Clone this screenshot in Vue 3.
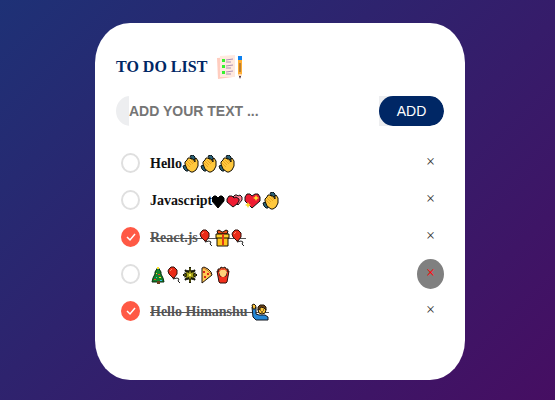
<script setup>
import { ref } from 'vue'

const draft = ref('')
const tasks = ref([
  { id: 1, text: 'Hello', icons: ['clap', 'clap', 'clap'], done: false },
  { id: 2, text: 'Javascript', icons: ['heart', 'hearts', 'sparkle', 'clap'], done: false },
  { id: 3, text: 'React.js', icons: ['balloon', 'gift', 'balloon'], done: true },
  { id: 4, text: '', icons: ['tree', 'balloon', 'firework', 'pizza', 'fries'], done: false, active: true },
  { id: 5, text: 'Hello Himanshu ', icons: ['raise'], done: true }
])

function addTask() {
  const text = draft.value.trim()
  if (!text) return
  tasks.value.push({ id: Date.now(), text, icons: [], done: false })
  draft.value = ''
}

function removeTask(id) {
  tasks.value = tasks.value.filter((task) => task.id !== id)
}
</script>

<template>
  <svg class="sprite" aria-hidden="true">
    <symbol id="clap" viewBox="0 0 18 18">
      <path d="M8 1l3-1 2 2 0 3-3 0z" fill="#2a6378" stroke="#0c161c" stroke-linejoin="round" />
      <path d="M1 11l3-1 3 3-1 3-2 0-2-2z" fill="#2a6378" stroke="#0c161c" stroke-linejoin="round" />
      <path d="M3 9l0-2 2-2 1-2 2 0 1 1 2 0 2 3 0-3 1-1 2 3v5l-2 4-3 2H9l-4-3z" fill="#ffc83d" stroke="#151005" stroke-linejoin="round" />
      <path d="M4 8l4 4M5 6l4 4M7 5l4 4M10 5l2 3" stroke="#e39a1c" stroke-width=".8" fill="none" />
    </symbol>
    <symbol id="heart" viewBox="0 0 14 18">
      <path d="M6 16L0 9V6l2-2h2l2 2 2-2h2l2 2v3z" fill="#000" stroke="#000" stroke-linejoin="round" />
    </symbol>
    <symbol id="hearts" viewBox="0 0 18 18">
      <path d="M12 13L7 8l0-3 2-2 2 0 1 1 2-1 2 2 0 3z" fill="#ff8295" stroke="#151010" stroke-linejoin="round" />
      <path d="M7 15L1 10V7l2-3 3 0 2 2 2-1 3 2 0 2-2 3z" fill="#ee1b32" stroke="#151010" stroke-linejoin="round" />
    </symbol>
    <symbol id="sparkle" viewBox="0 0 18 18">
      <path d="M8 16L1 9V5l2-3h3l2 2 3-2h3l2 3v4z" fill="#ee1b32" stroke="#151010" stroke-linejoin="round" />
      <path d="M12 3l1 2 2 1-2 1-1 2-1-2-2-1 2-1zM4 10l1 2 2 1-2 1-1 2-1-2-2-1 2-1z" fill="#ffdc32" />
    </symbol>
    <symbol id="balloon" viewBox="0 0 16 18">
      <path d="M8 11l-1 2 4-1 2 1-1 2 2 2" fill="none" stroke="#222" />
      <path d="M3 3l2-2h3l3 3v4l-3 4H7L3 8 2 5z" fill="#eb2b18" stroke="#30100b" stroke-linejoin="round" />
      <path d="M4 5l2-2" stroke="#ff8b69" />
    </symbol>
    <symbol id="gift" viewBox="0 0 16 18">
      <path d="M3 6h11v11H3z" fill="#ffc51c" stroke="#171005" />
      <path d="M3 2l2-1 3 2h1l3-2 2 1-1 3H4z" fill="#e8501c" stroke="#171005" />
      <path d="M2 5h13v4H2z" fill="#ffd12b" stroke="#171005" />
      <path d="M8 5h2v11H8z" fill="#df3a18" />
    </symbol>
    <symbol id="tree" viewBox="0 0 16 18">
      <path d="M8 1l3 5 0 2 2 4 1 4H2l1-4 2-4 0-2z" fill="#15852c" stroke="#0a2b10" stroke-linejoin="round" />
      <path d="M7 15h3v3H7z" fill="#69401c" />
      <path d="M7 1h2v2H7z" fill="#ffe129" />
      <path d="M6 7h1v1H6zM9 11h2v1H9z" fill="#ffe129" />
      <path d="M8 8h2v1H8zM4 13h2v1H4z" fill="#f03a27" />
      <path d="M6 11h1v1H6zM10 14h2v1h-2z" fill="#37bdeb" />
    </symbol>
    <symbol id="firework" viewBox="0 0 16 18">
      <path d="M8 1v16M1 9h14M3 4l10 10M13 4L3 14" stroke="#14160a" stroke-width="2" />
      <path d="M5 4l6 10M11 4L5 14M2 7l12 4M14 7L2 11" stroke="#14160a" />
      <circle cx="8" cy="9" r="5" fill="#1c1e07" />
      <path d="M8 4l1 3 3-1-1 3 1 3-3-1-1 3-1-3-3 1 1-3-1-3 3 1z" fill="#a8a41c" />
      <path d="M7 8h2v2H7z" fill="#fff65a" />
      <path d="M8 2v2M2 9h2M12 9h2M8 14v2" stroke="#8a8515" />
    </symbol>
    <symbol id="pizza" viewBox="0 0 16 18">
      <path d="M4 17V2l2-1 4 2 3 3 1 3z" fill="#ffca51" stroke="#20120b" stroke-linejoin="round" />
      <path d="M5 2l4 2 4 4" stroke="#cf792a" fill="none" />
      <path d="M5 5h2v2H5zM9 7h2v2H9zM6 10h2v2H6z" fill="#d9291d" />
    </symbol>
    <symbol id="fries" viewBox="0 0 16 18">
      <path d="M4 7V3l2 0 1-2 2 1 2-1 1 2 2 0v5z" fill="#f0512a" stroke="#23120b" stroke-linejoin="round" />
      <path d="M3 5l2 0 1 5h6l1-5 2 0-2 11-1 1H6l-1-1z" fill="#f3301d" stroke="#2a100c" stroke-linejoin="round" />
      <path d="M5 6l2-2h4l2 2-1 3-2 2H8L6 9z" fill="#ffd27a" />
    </symbol>
    <symbol id="raise" viewBox="0 0 18 18">
      <path d="M1 4h4v7l3 1h6l3 2v3H5l-3-3z" fill="#2689d8" stroke="#10141c" stroke-linejoin="round" />
      <path d="M1 2l2-1 2 2-1 3H2z" fill="#ffc83d" stroke="#21180b" />
      <circle cx="11" cy="7" r="4" fill="#ffc83d" stroke="#21180b" />
      <path d="M7 7V4l2-2h4l2 2v3l-2-2-3-1-2 3z" fill="#694019" stroke="#21180b" />
      <path d="M9 7h1M12 7h1M10 9h2" stroke="#21180b" />
    </symbol>
  </svg>

  <main class="page">
    <section class="card">
      <header class="title">
        <h1>TO DO LIST</h1>
        <svg class="logo" viewBox="0 0 26 26" aria-hidden="true">
          <path d="M0 4l15-1 1 20-15 2z" fill="#ffcdbf" />
          <path d="M3 2l15-1v22H3z" fill="#ffe9df" />
          <path d="M5 5h3v3H5zM5 11h3v3H5zM5 17h3v3H5z" fill="#36f22f" />
          <path d="M9 6l7-1M9 8h5M9 12l7-1M9 14h5M9 18l7-1M9 20h5" stroke="#ac91b5" />
          <path d="M21 5h4v15l-2 4-2-4z" fill="#ffad32" />
          <path d="M21 2h4v4h-4z" fill="#0c80ee" />
          <path d="M23 9v9" stroke="#775334" />
          <path d="M21 20h4l-2 3z" fill="#ffd9b5" />
          <path d="M22 22h2l-1 3z" fill="#32204c" />
        </svg>
      </header>

      <form class="entry" @submit.prevent="addTask">
        <input v-model="draft" class="field" type="text" placeholder="ADD YOUR TEXT ..." aria-label="Add your text" />
        <button class="add" type="submit">ADD</button>
      </form>

      <ul class="tasks">
        <li v-for="task in tasks" :key="task.id" class="task">
          <label class="item">
            <span class="tick">
              <input v-model="task.done" type="checkbox" />
              <svg v-if="task.done" viewBox="0 0 19 20" aria-hidden="true">
                <path d="M6 10l3 3 5-6" />
              </svg>
            </span>
            <span class="text" :class="{ done: task.done }">{{ task.text }}<svg
              v-for="(icon, index) in task.icons"
              :key="index"
              class="emoji"
              :class="icon"
              role="img"
              :aria-label="icon"
            ><use :href="'#' + icon" /></svg></span>
          </label>
          <button
            class="remove"
            :class="{ active: task.active }"
            type="button"
            aria-label="Remove task"
            @click="removeTask(task.id)"
          >×</button>
        </li>
      </ul>
    </section>
  </main>
</template>

<style>
body {
  margin: 0;
}
</style>

<style scoped>
* {
  box-sizing: border-box;
}

.sprite {
  position: absolute;
  width: 0;
  height: 0;
}

.page {
  min-height: 100vh;
  padding: 23px 20px 20px 25px;
  background: linear-gradient(135deg, #1e3176, #460e62);
  font-family: "Liberation Serif", "Times New Roman", serif;
}

.card {
  max-width: 370px;
  margin: 0 auto;
  padding: 31px 21px 51px;
  border-radius: 35px / 40px;
  background: #fff;
}

.title {
  display: flex;
  align-items: center;
  gap: 10px;
  margin-bottom: 16px;
}

.title h1 {
  margin: 0;
  color: #002765;
  font-size: 16px;
  line-height: 26px;
}

.logo {
  width: 26px;
  height: 26px;
}

.entry {
  display: flex;
  height: 30px;
  padding-left: 13px;
  border-radius: 14px / 15px;
  background: #edeef0;
  overflow: hidden;
}

.field {
  flex: 1;
  min-width: 0;
  padding: 0;
  border: 0;
  outline: 0;
  background: #fff;
  font: bold 14px "Liberation Sans", Arial, sans-serif;
}

.field::placeholder {
  color: #757575;
}

.add {
  width: 65px;
  padding: 0;
  border: 0;
  border-radius: 14px / 15px;
  background: #002765;
  color: #fff;
  font: 14px "Liberation Sans", Arial, sans-serif;
}

.tasks {
  margin: 18px 0 0;
  padding: 0;
  list-style: none;
}

.task {
  display: flex;
  align-items: center;
  justify-content: space-between;
  min-height: 37px;
  padding-left: 5px;
}

.item {
  display: flex;
  flex: 1;
  align-items: center;
  gap: 10px;
}

.tick {
  display: grid;
  width: 19px;
  height: 20px;
}

.tick > * {
  grid-area: 1 / 1;
}

.tick input {
  width: 100%;
  height: 100%;
  margin: 0;
  border: 2px solid #dfdfdf;
  border-radius: 50%;
  appearance: none;
}

.tick input:checked {
  border-color: #ff5945;
  background: #ff5945;
}

.tick svg {
  width: 19px;
  height: 20px;
  fill: none;
  stroke: #fff;
  stroke-width: 1.5;
  pointer-events: none;
}

.text {
  padding-top: 2px;
  color: #111;
  font-size: 14px;
  font-weight: bold;
  line-height: 18px;
  white-space: pre-wrap;
}

.text.done {
  background: linear-gradient(#555, #555) 0 11px / 100% 1px no-repeat;
  color: #555;
}

.emoji {
  width: 16px;
  height: 18px;
  vertical-align: top;
}

.emoji.heart {
  width: 14px;
}

.emoji.clap,
.emoji.hearts,
.emoji.sparkle,
.emoji.raise {
  width: 18px;
}

.remove {
  width: 27px;
  height: 30px;
  padding: 0 0 2px;
  border: 0;
  border-radius: 50%;
  background: transparent;
  color: #333;
  font: 16px "Liberation Serif", "Times New Roman", serif;
}

.remove:hover,
.remove.active {
  background: #808080;
  color: #f00;
}
</style>
